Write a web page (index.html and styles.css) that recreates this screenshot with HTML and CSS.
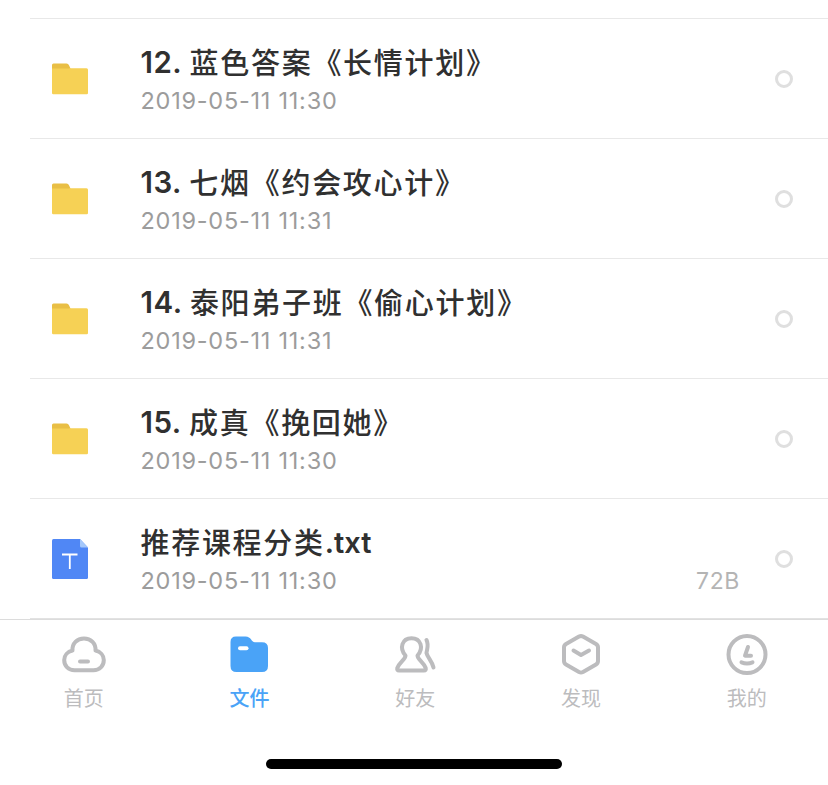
FILE: index.html
```html
<!DOCTYPE html>
<html lang="zh-CN">
<head>
<meta charset="utf-8">
<title>文件</title>
<link rel="stylesheet" href="styles.css">
</head>
<body>
<svg class="sprite" aria-hidden="true">
  <symbol id="folder" viewBox="0 0 36 32">
    <path fill="#e9bf45" d="M0 2Q0 .5 1.5 .5H14.500Q16.300 .5 17 2.200L18.500 5.500V10H0Z"/>
    <path fill="#f6d155" d="M0 5.500H15.500Q16.700 5.500 17.500 5.200H34.500Q36 5.200 36 6.700V30Q36 31.300 34.700 31.300H1.300Q0 31.300 0 30Z"/>
  </symbol>
</svg>
<main class="list">
  <article class="row">
    <svg class="file-icon" width="36" height="32"><use href="#folder"/></svg>
    <div class="info"><h2 class="name"><span class="num">12. </span>蓝色答案《长情计划》</h2><p class="date">2019-05-11 11:30</p></div>
    <i class="radio"></i>
  </article>
  <article class="row">
    <svg class="file-icon" width="36" height="32"><use href="#folder"/></svg>
    <div class="info"><h2 class="name"><span class="num">13. </span>七烟《约会攻心计》</h2><p class="date">2019-05-11 11:31</p></div>
    <i class="radio"></i>
  </article>
  <article class="row">
    <svg class="file-icon" width="36" height="32"><use href="#folder"/></svg>
    <div class="info"><h2 class="name"><span class="num">14. </span>泰阳弟子班《偷心计划》</h2><p class="date">2019-05-11 11:31</p></div>
    <i class="radio"></i>
  </article>
  <article class="row">
    <svg class="file-icon" width="36" height="32"><use href="#folder"/></svg>
    <div class="info"><h2 class="name"><span class="num">15. </span>成真《挽回她》</h2><p class="date">2019-05-11 11:30</p></div>
    <i class="radio"></i>
  </article>
  <article class="row">
    <svg class="file-icon" width="36" height="40" viewBox="0 0 36 40">
      <path fill="#5087f5" d="M1.500 0H28L36 8.500V38.500Q36 40 34.500 40H1.500Q0 40 0 38.500V1.500Q0 0 1.500 0Z"/>
      <path fill="#a4c8fb" d="M28 0L36 8.500H29.500Q28 8.500 28 7Z"/>
      <path fill="none" stroke="#fff" stroke-width="1.800" d="M10 15.500H25.500M17.800 15.500V30"/>
    </svg>
    <div class="info"><h2 class="name">推荐课程分类<span class="ext">.txt</span></h2><p class="date">2019-05-11 11:30</p></div>
    <span class="size">72B</span>
    <i class="radio"></i>
  </article>
</main>
<nav class="tabs">
  <a class="tab">
    <svg width="48" height="44" viewBox="0 0 48 44"><path d="M12.500 17.500C12 10.500 17 5.500 24 5.500S36 10.500 35.500 17.500C40.500 18.500 43.800 22.500 43.800 27C43.800 33 39.500 37.200 33.500 37.200H14.500C8.500 37.200 4.200 33 4.200 27C4.200 22.500 7.500 18.500 12.500 17.500Z"/><path d="M20 28.500H28"/></svg>
    <span>首页</span>
  </a>
  <a class="tab active">
    <svg width="48" height="44" viewBox="0 0 48 44"><path class="solid" d="M11 3.500H20.500C26.500 3.500 26 9.200 30 9.200H37Q43 9.200 43 15V33Q43 39 37 39H11.500Q5.500 39 5.500 33V9Q5.500 3.500 11 3.500Z"/><path class="slot" d="M15 15.300H21.500"/></svg>
    <span>文件</span>
  </a>
  <a class="tab">
    <svg width="48" height="44" viewBox="0 0 48 44"><path d="M14.500 22.500C8 15.500 11 5.200 20.500 5.200S33 15.500 26.500 22.500C26.500 26.500 32.500 29 34.700 35Q35.300 37.500 33 37.500H8Q5.700 37.500 6.300 35C8.500 29 14.500 26.500 14.500 22.500Z"/><path d="M35.500 7C38 12 36 16 35.500 20C36.500 24.500 41 28 42.500 34.500"/></svg>
    <span>好友</span>
  </a>
  <a class="tab">
    <svg width="48" height="44" viewBox="0 0 48 44"><path d="M22 3.600Q24 2.600 26 3.600L39 11Q41 12.200 41 14.500V28Q41 30.300 39 31.500L26 39Q24 40 22 39L9 31.500Q7 30.300 7 28V14.500Q7 12.200 9 11Z"/><path d="M16.500 17.500L24 22L32 17.500"/></svg>
    <span>发现</span>
  </a>
  <a class="tab">
    <svg width="48" height="44" viewBox="0 0 48 44"><circle cx="24" cy="21.500" r="18.500"/><path d="M25 14L22 22.700H28M18.500 29.300Q24 31.500 29.500 29.300"/></svg>
    <span>我的</span>
  </a>
</nav>
<div class="home-bar"></div>
</body>
</html>
```
FILE: styles.css
```css
* { box-sizing: border-box; }
body {
  margin: 0;
  height: 785px;
  overflow: hidden;
  background: #fff;
  font-family: Inter, "Noto Sans CJK SC", sans-serif;
}
.sprite { display: none; }
.list { padding: 18px 0 0 30px; }
.row {
  display: flex;
  align-items: center;
  height: 120px;
  padding: 1px 35px 0 22px;
  border-top: 1px solid #e8e8e8;
}
.row:last-child {
  height: 121px;
  padding-top: 1px;
  border-bottom: 1px solid #e2e2e2;
}
.file-icon { flex: none; margin-right: 52px; }
.info { flex: 1; padding: 5px 0 0 .5px; }
.name {
  margin: 0;
  height: 39px;
  font-size: 29px;
  line-height: 40px;
  font-weight: 500;
  letter-spacing: 1.7px;
  color: #303030;
  white-space: nowrap;
}
.num,
.ext {
  font-weight: 600;
  line-height: 1;
  vertical-align: 1px;
}
.num { font-size: 29.5px; letter-spacing: .5px; }
.ext { letter-spacing: 0; }
.date {
  margin: 0;
  height: 36px;
  font-size: 23.5px;
  line-height: 36px;
  letter-spacing: .75px;
  color: #9c9c9c;
}
.size {
  align-self: flex-end;
  margin: 0 35px 19px 0;
  font-size: 23px;
  line-height: 36px;
  letter-spacing: .6px;
  color: #b4b4b4;
}
.radio {
  width: 18px;
  height: 18px;
  border: 3px solid #dfdfdf;
  border-radius: 50%;
}
.tabs {
  display: flex;
  height: 139px;
  margin-right: -1px;
  border-top: 1px solid #dcdcdc;
}
.tab {
  flex: 1;
  display: flex;
  flex-direction: column;
  align-items: center;
  padding: 13px 0 0 1.5px;
  font-size: 20px;
  line-height: 30px;
  color: #bcbcbe;
}
.tab svg {
  flex: none;
  margin-bottom: 7px;
  fill: none;
  stroke: currentColor;
  stroke-width: 4;
  stroke-linecap: round;
  stroke-linejoin: round;
}
.tab.active { color: #4aa3f7; font-weight: 500; }
.tab .solid { fill: currentColor; stroke: none; }
.tab .slot { stroke: #fff; }
.home-bar {
  width: 296px;
  height: 10px;
  margin: 1px auto 0;
  border-radius: 5px;
  background: #000;
}
```
